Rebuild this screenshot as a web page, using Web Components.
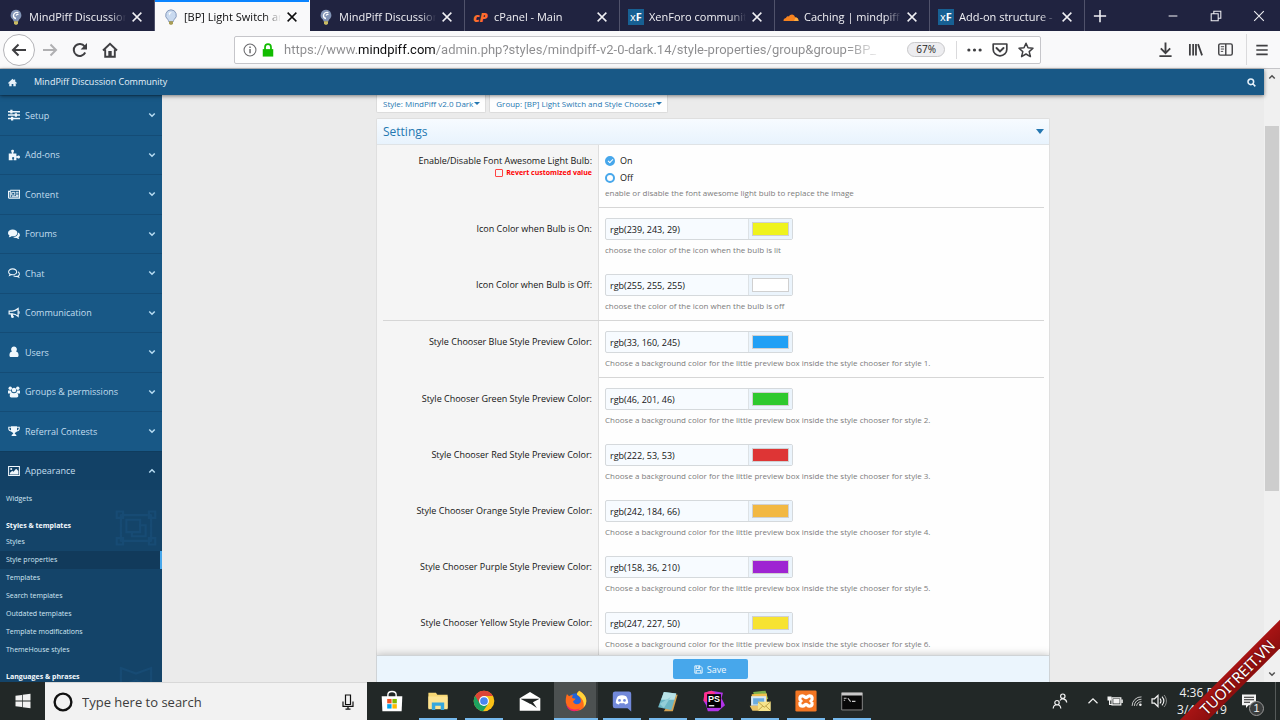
<!DOCTYPE html>
<html lang="en">
<head>
<meta charset="utf-8">
<meta name="viewport" content="width=device-width, initial-scale=1">
<title>[BP] Light Switch and Style Chooser</title>
<style>
  html, body { margin: 0; height: 100%; overflow: hidden; }
  body { font-family: "Open Sans", "Noto Sans", sans-serif; font-size: 9px; }
</style>
</head>
<body>
<desktop-screen>
  <browser-tabs slot="tabs"></browser-tabs>
  <browser-toolbar slot="toolbar"></browser-toolbar>
  <admin-page slot="page">
    <admin-header slot="header"></admin-header>
    <admin-sidebar slot="sidebar"></admin-sidebar>
    <menu-button slot="menus">Style: MindPiff v2.0 Dark</menu-button>
    <menu-button slot="menus">Group: [BP] Light Switch and Style Chooser</menu-button>
    <settings-panel heading="Settings">
      <toggle-property label="Enable/Disable Font Awesome Light Bulb:">enable or disable the font awesome light bulb to replace the image</toggle-property>
      <color-property label="Icon Color when Bulb is On:" value="rgb(239, 243, 29)">choose the color of the icon when the bulb is lit</color-property>
      <color-property rule="full" label="Icon Color when Bulb is Off:" value="rgb(255, 255, 255)">choose the color of the icon when the bulb is off</color-property>
      <color-property rule="half" label="Style Chooser Blue Style Preview Color:" value="rgb(33, 160, 245)">Choose a background color for the little preview box inside the style chooser for style 1.</color-property>
      <color-property label="Style Chooser Green Style Preview Color:" value="rgb(46, 201, 46)">Choose a background color for the little preview box inside the style chooser for style 2.</color-property>
      <color-property label="Style Chooser Red Style Preview Color:" value="rgb(222, 53, 53)">Choose a background color for the little preview box inside the style chooser for style 3.</color-property>
      <color-property label="Style Chooser Orange Style Preview Color:" value="rgb(242, 184, 66)">Choose a background color for the little preview box inside the style chooser for style 4.</color-property>
      <color-property label="Style Chooser Purple Style Preview Color:" value="rgb(158, 36, 210)">Choose a background color for the little preview box inside the style chooser for style 5.</color-property>
      <color-property label="Style Chooser Yellow Style Preview Color:" value="rgb(247, 227, 50)">Choose a background color for the little preview box inside the style chooser for style 6.</color-property>
    </settings-panel>
  </admin-page>
  <page-scrollbar slot="scrollbar"></page-scrollbar>
  <task-bar slot="taskbar"></task-bar>
  <corner-ribbon slot="overlay">TUOITREIT.VN</corner-ribbon>
</desktop-screen>

<script>
(function () {
  // stroke icon helper
  const line = (d, w = 1.5, extra = '') =>
    `<path d="${d}" fill="none" stroke="currentColor" stroke-width="${w}" ${extra}/>`;

  // All on a 16x16 grid
  const ICONS = {
    back: line('M15 8H2M7.5 2.5L2 8l5.5 5.5', 2),
    forward: line('M1 8h13M8.5 2.5L14 8l-5.5 5.5', 2),
    reload: line('M13.2 10.5A6 6 0 1 1 12.6 4.3', 2) + '<path d="M15 1v6.5H8.6z" fill="currentColor"/>',
    house: line('M1 8.5L8 1.8l7 6.7M3.2 7.5v7.3h9.6V7.5', 1.9) + '<path d="M6.3 9h3.4v6H6.3z" fill="currentColor"/>',
    info: line('M8 1.2a6.8 6.8 0 1 0 0 13.6A6.8 6.8 0 1 0 8 1.2z', 1.2) + '<path d="M7.2 6.8h1.7v5H7.2zM7.2 4h1.7v1.7H7.2z" fill="currentColor"/>',
    lock: '<path d="M2 7h12v8.5H2z" fill="currentColor"/>' + line('M4.6 8V4.8a3.4 3.4 0 0 1 6.8 0V8', 2),
    dots: '<g fill="currentColor"><circle cx="2" cy="8" r="1.7"/><circle cx="8" cy="8" r="1.7"/><circle cx="14" cy="8" r="1.7"/></g>',
    pocket: line('M1.2 2h13.6v5.5a6.8 6.3 0 0 1-13.6 0z', 1.7, 'stroke-linejoin="round"') + line('M4.5 6L8 9.4 11.5 6', 2, 'stroke-linecap="round"'),
    star: line('M8 1.2l2 4.6 5 .5-3.8 3.3 1.2 5L8 12l-4.4 2.6 1.2-5L1 6.3l5-.5z', 1.5, 'stroke-linejoin="round"'),
    download: line('M8 .5v11M3 6.8l5 5 5-5M1.5 15h13', 2),
    library: line('M2 2v12.5M5.5 2v12.5M8.5 2v12.5M10.7 2.3l4.3 12', 1.9),
    reader: line('M2.5 2h11a1.7 1.7 0 0 1 1.7 1.7v8.6a1.7 1.7 0 0 1-1.7 1.7h-11A1.7 1.7 0 0 1 .8 12.3V3.7A1.7 1.7 0 0 1 2.5 2zM8.3 2v12', 1.5) + line('M3 5h3.5M3 7.5h3.5M3 10h2.5', 1),
    burger: line('M1.5 3h13M1.5 8h13M1.5 13h13', 1.9),
    close: line('M3 3l10 10M13 3L3 13', 1.7),
    plus: line('M8 1v14M1 8h14', 1.8),
    minimize: line('M3 8h10', 1.2),
    restore: line('M2.5 5.5h8v8h-8zM5.5 5.5v-3h8v8h-3', 1.2),
    winClose: line('M2.5 2.5l11 11M13.5 2.5l-11 11', 1.2),
    chevronDown: line('M2.5 5L8 10.5 13.5 5', 3),
    chevronUp: line('M2.5 11L8 5.5l5.5 5.5', 3),
    bulb: `<path d="M8 .8a5.4 5.4 0 0 0-3.2 9.7c.5.5.7 1.3.8 2h4.8c.1-.7.3-1.5.8-2A5.4 5.4 0 0 0 8 .8z" fill="#c9daf0" stroke="#7f93b5" stroke-width=".9"/>
      <path d="M5.7 4.3A3 3 0 0 1 9 3.4c-1.5.6-2.3 1.7-2.3 3.4" fill="#fff"/><path d="M6 12.3h4v2.3L9 15.800H7l-1-1.200z" fill="#a99d55"/>`,
    bulbDark: `<path d="M8 .8a5.4 5.4 0 0 0-3.2 9.7c.5.5.7 1.3.8 2h4.8c.1-.7.3-1.5.8-2A5.4 5.4 0 0 0 8 .8z" fill="#8294b6"/>
      <path d="M10.4 3.7a3.5 3.5 0 0 0-4.9 2.6 3 3 0 0 0 2.5 3.2M10.5 5.5A2 2 0 0 0 8 6.5" fill="none" stroke="#fff" stroke-width="1.3"/><path d="M6 12.3h4v2.3L9 15.8H7l-1-1.2z" fill="#c9bb62"/>`,
    cloud: '<path d="M.5 12c0-2 1.2-2.8 2.5-2.9C3.4 7.2 5 7 6 7.5 7 5 11.3 4.7 12 8.3c2 0 3.5 1.5 3.5 3.7z" fill="#f6821f"/><path d="M11 12l1.4-3.6c2 0 3.2 1.5 3.1 3.6z" fill="#fbad41"/>',
    home: '<path d="M8 1.5l2.8 2.5V2.5h2V6L16 8.8 15 10l-1.2-1v5.5H9.5v-4h-3v4H2.2V9L1 10 0 8.8z" fill="currentColor"/>',
    search: line('M6.8 1.8a5 5 0 1 0 0 10 5 5 0 1 0 0-10zM10.3 10.3l4.5 4.5', 2.8),
    sliders: '<path d="M0 2.5h3V1h3v1.5h10v2H6V6H3V4.5H0zM0 7h9V5.8h3V7h4v2h-4v1.3H9V9H0zM0 11.7h4v-1.5h3v1.5h9v2H7v1.5H4v-1.5H0z" fill="currentColor"/>',
    puzzle: '<path d="M1 6h4.2C5.6 4.5 4 3.8 4.2 2.3 4.6.5 7.7.5 8 2.3 8.2 3.8 6.7 4.5 7 6h4.2v3.5c1.6.3 2-1 3.3-.8 2 .4 2 3.6 0 4-1.4.2-1.7-1.2-3.3-1V15H7.6c-.5-1.7 1-2 .7-3.2-.4-1.3-2.5-1.3-2.9 0-.3 1.2 1.2 1.6.7 3.2H1z" fill="currentColor"/>',
    news: line('M3 3h12.3v10.5H2A1.3 1.3 0 0 1 .7 12V4.5H3V12', 1.4) + line('M5 5.8h4v3.7H5zM10.5 5.8H14M10.5 8h3.5M10.5 10H14M5 11.5h9', 1.2),
    comments: '<path d="M6.2 2C2.8 2 0 4 0 6.6c0 1.4.8 2.6 2.1 3.4L1 12.4c1.5-.2 2.8-.7 3.7-1.4 4.3.7 7.8-1.5 7.8-4.4S9.6 2 6.2 2z" fill="currentColor"/><path d="M13.3 6c.4 3.5-2.5 6-6.5 6.2 1.2.9 3 1.3 4.7 1 .9.7 2 1.1 3.5 1.3l-1-2.2c2.5-1.5 2.6-4.9-.7-6.3z" fill="currentColor"/>',
    commentsO: line('M6.2 2.5C3.2 2.5.8 4.3.8 6.6c0 1.3.8 2.4 2 3.1l-.7 1.6 2.5-1.2C8.5 10.8 11.6 9 11.6 6.6S9.2 2.5 6.2 2.5z', 1.4) + line('M13.3 6.3c2.7 1.5 2.4 4.3.2 5.7l.8 1.7-2.6-1.2c-1.6.2-3.2-.1-4.3-.8', 1.4),
    bullhorn: line('M1.5 5.5h4.2C8.5 5.5 11 4.2 13.5 2v10.5C11 10.2 8.5 9.2 5.7 9.2H1.5z', 1.6) + '<path d="M3.5 9h3c-.3 2 .5 3 1.6 4-.7 2-3 1.8-3.8.9zM14 5.5h1.5v3.6H14z" fill="currentColor"/>',
    user: '<path d="M8 .8a3.7 3.7 0 0 1 2.7 6.4c2.5.4 3.4 2.5 3.4 5 0 1.7-.9 2.6-2.3 2.6H4.2c-1.4 0-2.3-.9-2.3-2.6 0-2.5.9-4.6 3.4-5A3.7 3.7 0 0 1 8 .8z" fill="currentColor"/>',
    users: '<g fill="currentColor"><circle cx="3" cy="3" r="2.3"/><circle cx="13" cy="3" r="2.3"/><circle cx="8" cy="5.3" r="3"/><path d="M0 6h3.9c.1 1 .5 1.8 1 2.3L3.5 10H0zM16 6h-3.9c-.1 1-.5 1.8-1 2.3l1.4 1.7H16zM4.8 8.5c2 1.4 4.4 1.4 6.4 0 2 .7 2.5 2.7 2.5 4.5 0 1.5-.8 2.3-2 2.3H4.3c-1.2 0-2-.8-2-2.3 0-1.8.5-3.8 2.5-4.5z"/></g>',
    trophy: '<path d="M4 1.5h8V8c0 1.5-2.8 2-3 3.3-.1 1 2.2 1 2.2 2.7v.7H4.8V14c0-1.7 2.3-1.7 2.2-2.7C6.8 10 4 9.5 4 8z" fill="currentColor"/>' + line('M4 3H1v1.5C1 6.5 2.7 7.8 5 8M12 3h3v1.5c0 2-1.7 3.3-4 3.5', 1.4),
    picture: line('M.8 2h14.4v12H.8z', 1.4) + '<path d="M2.5 12.5v-2L5.6 7.5 7.3 9l3.5-4 3 3v4.5z" fill="currentColor"/><circle cx="4.3" cy="5.3" r="1.4" fill="currentColor"/>',
    floppy: line('M1.5 1.5H11L14.5 5v9.5h-13zM4 1.8v4.4h6V1.8M4 14V9.5h8V14', 1.6) + '<path d="M7.7 2h2v3.5h-2z" fill="currentColor"/>',
    group: line('M2.5 3.3h11M2.5 12.7h11M2.5 3v10M13.5 3v10M4.5 5h5v4.5h-5zM9.5 7h2v4h-5V9.5', .8) + line('M1 2h2.3v2.3H1zM12.7 2H15v2.3h-2.3zM1 11.7h2.3V14H1zM12.7 11.7H15V14h-2.3z', .8),
    flag: '<path d="M2.5 4l5.5 2 5.5-2v6.5L8 8.5l-5.5 2z" fill="none" stroke="currentColor" stroke-width=".8"/>',
    windows: '<path d="M.5 2.8L7 1.9v5.7H.5zM7.7 1.8L15.5.7v6.9H7.7zM.5 8.4H7v5.7l-6.5-.9zM7.7 8.4h7.8v6.9l-7.8-1.1z" fill="currentColor"/>',
    ring: line('M8 1.3a6.7 6.7 0 1 0 0 13.4A6.7 6.7 0 1 0 8 1.3z', 1.9),
    mic: line('M5.5 1h5v9.5h-5zM3 7.5v4.8h10V7.5M8 12.5V15M5.5 15.2h5', 1.2),
    store: `<path d="M5 5V3.5C5 .3 11 .3 11 3.5V5" fill="none" stroke="#fff" stroke-width="1"/><path d="M.5 4.5h15l-.5 11H1z" fill="#fff"/>
      <path d="M4.5 6.5h3.2v3.2H4.5z" fill="#f25022"/><path d="M8.3 6.5h3.2v3.2H8.3z" fill="#7fba00"/><path d="M4.5 10.3h3.2v3.2H4.5z" fill="#00a4ef"/><path d="M8.3 10.3h3.2v3.2H8.3z" fill="#ffb900"/>`,
    explorer: '<path d="M1 2h5.5l1 1.5H15v9.5H1z" fill="#f7d774"/><path d="M1 4.7h14V14H1z" fill="#fde391"/><path d="M3.5 14.5V9h9v5.5H10v-3H6v3z" fill="#35a7dd"/>',
    chrome: `<circle cx="8" cy="8" r="7.5" fill="#fbc116"/><path d="M1.5 4.25A7.5 7.5 0 0 0 7.3 15.5L11.2 9.8 8 8z" fill="#1da260"/>
      <path d="M1.5 4.25L5 10 8 8V4.3H14.5A7.5 7.5 0 0 0 1.5 4.25z" fill="#dc4437"/><circle cx="8" cy="8" r="3.6" fill="#fff"/><circle cx="8" cy="8" r="2.8" fill="#4886ef"/>`,
    mail: '<path d="M.5 6L8 1.5 15.5 6v9H.5z" fill="#fff"/><path d="M1 6.3h14L8 10z" fill="#202524"/><path d="M7 9l6 4-3.5-5z" fill="#202524"/>',
    firefox: `<circle cx="8" cy="8.3" r="6" fill="#2464d8"/><path d="M1.3 3.2C1.7 3 2.5 4.3 3 4.5 4 3.8 5 3.7 6 4c-.8.6-.9 1.2-.8 1.7.8.6 1.7.5 2.5.7-.3 1-1.5 1.2-1.8 2 .6 2.3 3.3 2.3 4.8 1.3C12.7 8 11 4.5 8.7 3.4c-.1-1.2.8-2 1.6-2.9 3 1.8 5.3 4.3 5.2 7.6A7.5 7.5 0 0 1 .6 9C.4 6.7.7 5 1.3 3.2z" fill="#ff6a1a"/>
      <path d="M10.3.5c3 1.8 5.3 4.3 5.2 7.6-.1 2-1 3.5-2 4.6.7-3.7-.5-6.7-4.8-9.3-.1-1.2.8-2 1.6-2.9z" fill="#ffd43a"/><path d="M.8 10c1.5 3.8 6.5 5.3 10.2 3.3-2.3 3.3-9 3.2-10.2-3.3z" fill="#f0246a"/>`,
    discord: '<path d="M3 1h10a1.7 1.7 0 0 1 1.7 1.7V15.6L12 13.3H3a1.7 1.7 0 0 1-1.7-1.7V2.7A1.7 1.7 0 0 1 3 1z" fill="#7289da"/><path d="M5 4.5c2-.8 4-.8 6 0 1 1.5 1.5 3 1.5 5-.8.7-1.5.9-2.3 1l-.6-1c-1.1.2-2.1.2-3.2 0l-.6 1c-.8-.1-1.5-.3-2.3-1 0-2 .5-3.5 1.5-5z" fill="#fff"/><circle cx="6.2" cy="7.6" r="1" fill="#7289da"/><circle cx="9.8" cy="7.6" r="1" fill="#7289da"/>',
    notes: '<path d="M12.5 3l2.5.5-3.5 12H5z" fill="#d5a251"/><path d="M5 1.5l9 1-3.5 12L.8 12.5z" fill="#6db6c4"/><path d="M5 1.5l9 1-1.3 4.5L3 7z" fill="#b9e2e7"/><path d="M2 10l8-5-5 8z" fill="#93ced8"/>',
    hexes: '<path d="M1 2l5-1.5L14.5 2l-1 4L16 11l-5 4.5H3.5L2.3 11 .4 8z" fill="#b234e8"/><path d="M1 2l5-1.5L9 2 4 9 .4 8z" fill="#ff318c"/><path d="M3 3h10v10H3z" fill="#000"/><path d="M4.2 11h4v.9h-4z" fill="#fff"/>',
    photos: '<path d="M3 1.5l9-1 2 6-9 2z" fill="#7eb04c"/><path d="M2 3l11-.5V9H2z" fill="#f1bf4c"/><path d="M1.5 4.5h11v7h-11z" fill="#d9e8f3"/><path d="M3 6h8v4.5H3z" fill="#6aabdf"/><path d="M.5 11.5h7V15h-5z" fill="#e8c265"/><path d="M6.5 8.5h9.3v6.8H6.5z" fill="#f6e48c"/><path d="M6.5 8.5l4.6 4 4.7-4M6.5 15l3.5-3.3M15.8 15l-3.5-3.3" fill="none" stroke="#b6963a" stroke-width=".6"/>',
    xampp: '<rect x=".3" y=".3" width="15.4" height="15.4" rx="1" fill="#f37623"/><path d="M5.5 4.3c1.4 0 1.7 1.3 2.5 1.3s1.1-1.3 2.5-1.3c2.4 0 2.4 2.5 1.2 3.7 1.2 1.2 1.2 3.7-1.2 3.7-1.4 0-1.7-1.3-2.5-1.3s-1.1 1.3-2.5 1.3c-2.4 0-2.4-2.5-1.2-3.7-1.2-1.2-1.2-3.7 1.2-3.7z" fill="none" stroke="#fff" stroke-width="2.3"/>',
    console: '<path d="M.5 2h15v12.5H.5z" fill="#080808" stroke="#888" stroke-width=".7"/><path d="M.5 2h15v2H.5z" fill="#c8c8c8"/><path d="M2 6h2M2 7.5h1M5 6l2 2.5M8 8.3h2.5" fill="none" stroke="#ccc" stroke-width=".8"/>',
    people: line('M5 7.5a2.2 2.2 0 1 0 0 4.4 2.2 2.2 0 1 0 0-4.4zM1.2 15.5c.3-5 7.3-5 7.6 0M10.8 1a2.2 2.2 0 1 0 0 4.4 2.2 2.2 0 1 0 0-4.4zM8 7.5c1.5-2.5 6.5-2 6.7 2', 1.2),
    caretUp: line('M2 11l6-6 6 6', 1.6),
    battery: line('M5 4.8h8.8v7H5z', 1.2) + '<path d="M6.3 6h6.3v4.5H6.3zM14.3 6.5h1.5V10h-1.5zM.5 3.5h4v4h-4zM2 7h1.2v5H2zM3 11h2v1H3z" fill="currentColor"/>',
    wifi: line('M1.5 14.5A12 12 0 0 1 14 2.5M4.5 14.5A9 9 0 0 1 14 5.7M7.5 14.5A6 6 0 0 1 14 9', 1.3, 'opacity=".8"') + '<circle cx="12.5" cy="13" r="1.7" fill="currentColor"/>',
    speaker: line('M1 5.8h2.5L7 2.5v11L3.5 10.2H1z', 1.2) + line('M9 5.5c1.2 1.5 1.2 3.5 0 5M11 3.7c2.2 2.5 2.2 6 0 8.6', 1.1) + line('M13 2c3.2 3.5 3.2 8.5 0 12', 1, 'opacity=".5"'),
    action: '<path d="M1 1.5h14v10.8H7.5L5 15v-2.7H1z" fill="currentColor"/><path d="M3 4.3h10M3 6.8h10M3 9.3h6" stroke="#222" stroke-width="1.1"/>'
  };

  // Attach an open shadow root filled from a template
  function render(el, html) {
    const tpl = document.createElement('template');
    tpl.innerHTML = html;
    el.attachShadow({ mode: 'open' }).appendChild(tpl.content.cloneNode(true));
  }

  class UiIcon extends HTMLElement {
    connectedCallback() {
      if (this.shadowRoot) return;
      render(this, `
        <style>
          :host { display: inline-block; flex: none; width: 16px; height: 16px; }
          svg { display: block; width: 100%; height: 100%; }
        </style>
        <svg viewBox="0 0 16 16" aria-hidden="true">${ICONS[this.getAttribute('name')] || ''}</svg>
      `);
    }
  }

  class DesktopScreen extends HTMLElement {
    constructor() {
      super();
      render(this, `
        <style>
          :host { display: flex; flex-direction: column; height: 100vh; position: relative; overflow: hidden; }
          .view { display: flex; flex: 1; min-height: 0; }
        </style>
        <slot name="tabs"></slot>
        <slot name="toolbar"></slot>
        <div class="view"><slot name="page"></slot><slot name="scrollbar"></slot></div>
        <slot name="taskbar"></slot>
        <slot name="overlay"></slot>
      `);
    }
  }

  class BrowserTab extends HTMLElement {
    constructor() {
      super();
      render(this, `
        <style>
          :host {
            display: flex; align-items: center; box-sizing: border-box;
            flex: 0 1 155px; min-width: 0; height: 31px; padding: 2px 9px 0 8px;
            border-right: 1px solid #50526b; color: #f0f0f4; font-size: 11px;
          }
          :host([active]) { background: #f9f9fa; color: #0c0c0d; border-right-color: #f9f9fa; box-shadow: inset 0 2px #0a84ff; }
          .title {
            flex: 1; min-width: 0; margin: 0 3px 0 5px; overflow: hidden; white-space: nowrap;
            line-height: 20px; -webkit-mask-image: linear-gradient(to left, transparent, #000 16px);
          }
          button { flex: none; width: 16px; height: 16px; padding: 1px; border: 0; background: none; color: inherit; }
          ui-icon { width: 14px; height: 14px; }
        </style>
        <slot name="icon"></slot>
        <span class="title"><slot></slot></span>
        <button aria-label="Close tab"><ui-icon name="close"></ui-icon></button>
      `);
    }
  }

  class BrowserTabs extends HTMLElement {
    constructor() {
      super();
      render(this, `
        <style>
          :host { display: flex; flex: none; height: 31px; background: #202340; color: #f0f0f4; }
          .cp { width: 16px; color: #ff6c2c; font: italic 800 13px/16px "Open Sans", sans-serif; }
          .xf { width: 16px; background: #176093; color: #fff; font: 11px/16px "Open Sans", sans-serif; text-align: center; }
          .xf b { font-weight: 700; }
          button { flex: none; display: grid; place-items: center; padding: 0; border: 0; background: none; color: inherit; }
          .new { width: 30px; }
          .new ui-icon { width: 14px; height: 14px; }
          .window { display: flex; margin-left: auto; }
          .window button { width: 43px; }
          .window ui-icon { width: 14px; height: 14px; }
        </style>
        <browser-tab><ui-icon slot="icon" name="bulbDark"></ui-icon>MindPiff Discussion C</browser-tab>
        <browser-tab active><ui-icon slot="icon" name="bulb"></ui-icon>[BP] Light Switch and</browser-tab>
        <browser-tab><ui-icon slot="icon" name="bulbDark"></ui-icon>MindPiff Discussion C</browser-tab>
        <browser-tab><span slot="icon" class="cp">cP</span>cPanel - Main</browser-tab>
        <browser-tab><span slot="icon" class="xf">x<b>F</b></span>XenForo community</browser-tab>
        <browser-tab><ui-icon slot="icon" name="cloud"></ui-icon>Caching | mindpiff.c</browser-tab>
        <browser-tab><span slot="icon" class="xf">x<b>F</b></span>Add-on structure - X</browser-tab>
        <button class="new" aria-label="New tab"><ui-icon name="plus"></ui-icon></button>
        <div class="window">
          <button aria-label="Minimize"><ui-icon name="minimize"></ui-icon></button>
          <button aria-label="Restore"><ui-icon name="restore"></ui-icon></button>
          <button aria-label="Close"><ui-icon name="winClose"></ui-icon></button>
        </div>
      `);
    }
  }

  class BrowserToolbar extends HTMLElement {
    constructor() {
      super();
      render(this, `
        <style>
          :host {
            display: flex; align-items: center; flex: none; box-sizing: border-box; height: 38px;
            padding: 0 8px 0 3px; background: #f9f9fa; color: #3f3f42; border-bottom: 1px solid #c5c5c8;
          }
          button { flex: none; display: grid; place-items: center; width: 30px; height: 30px; padding: 0; border: 0; background: none; color: inherit; }
          .back { box-sizing: border-box; width: 32px; height: 32px; border: 1px solid #b4b4b8; border-radius: 50%; background: #fff; }
          [disabled] { color: #b0b0b2; }
          .address {
            display: flex; align-items: center; flex: 1; min-width: 0; box-sizing: border-box; height: 28px;
            margin: 0 109px 0 109px; padding: 0 1px 0 8px; border: 1px solid #c6c6ca; border-radius: 2px; background: #fff;
          }
          .address button { width: 26px; height: 26px; }
          .lock { margin: 0 9px 0 4px; color: #12bc00; width: 14px; height: 14px; }
          .info { color: #6b6b6e; width: 14px; height: 14px; }
          input {
            flex: 1; min-width: 0; height: 24px; padding: 0; border: 0; outline: 0; font: 13px Roboto, sans-serif; color: #8c8c8e;
            background: linear-gradient(90deg, #8c8c8e 73px, #0c0c0d 73px 152px, #8c8c8e 152px calc(100% - 60px), transparent calc(100% - 24px));
            -webkit-background-clip: text; background-clip: text; -webkit-text-fill-color: transparent;
          }
          .zoom { padding: 0 8px; border: 1px solid #c8c8ca; border-radius: 8px; background: #ededf0; color: #222; font-size: 10px; line-height: 13px; }
          .bar { align-self: stretch; width: 1px; margin: 4px 4px 4px 11px; background: #dadadc; }
          .bar.end { margin: 3px 5px 3px 6px; }
          .dots { width: 15px; }
          .menu { width: 20px; }
          .menu ui-icon { width: 14px; height: 14px; }
          .tool ui-icon { width: 15px; height: 15px; }
        </style>
        <button class="back" aria-label="Back"><ui-icon name="back"></ui-icon></button>
        <button disabled aria-label="Forward"><ui-icon name="forward"></ui-icon></button>
        <button aria-label="Reload"><ui-icon name="reload"></ui-icon></button>
        <button aria-label="Home"><ui-icon name="house"></ui-icon></button>
        <div class="address">
          <ui-icon class="info" name="info"></ui-icon>
          <ui-icon class="lock" name="lock"></ui-icon>
          <input type="text" aria-label="Address" value="https://www.mindpiff.com/admin.php?styles/mindpiff-v2-0-dark.14/style-properties/group&amp;group=BP_">
          <span class="zoom">67%</span>
          <span class="bar"></span>
          <button aria-label="Page actions"><ui-icon class="dots" name="dots"></ui-icon></button>
          <button aria-label="Save to Pocket"><ui-icon name="pocket"></ui-icon></button>
          <button aria-label="Bookmark"><ui-icon name="star"></ui-icon></button>
        </div>
        <button class="tool" aria-label="Downloads"><ui-icon name="download"></ui-icon></button>
        <button class="tool" aria-label="Library"><ui-icon name="library"></ui-icon></button>
        <button class="tool" aria-label="Sidebars"><ui-icon name="reader"></ui-icon></button>
        <span class="bar end"></span>
        <button class="menu" aria-label="Menu"><ui-icon name="burger"></ui-icon></button>
      `);
    }
  }

  class AdminPage extends HTMLElement {
    constructor() {
      super();
      render(this, `
        <style>
          :host { display: flex; flex-direction: column; flex: 1; min-width: 0; background: #ebebeb; }
          .body { display: flex; flex: 1; min-height: 0; }
          main {
            display: flex; flex-direction: column; flex: 1; min-width: 0;
            box-sizing: border-box; max-width: 674px; margin: 0 auto;
          }
          .menus { display: flex; flex: none; gap: 3px; margin-bottom: 5px; }
        </style>
        <slot name="header"></slot>
        <div class="body">
          <slot name="sidebar"></slot>
          <main>
            <div class="menus"><slot name="menus"></slot></div>
            <slot></slot>
          </main>
        </div>
      `);
    }
  }

  class AdminHeader extends HTMLElement {
    constructor() {
      super();
      render(this, `
        <style>
          :host {
            display: flex; align-items: center; flex: none; height: 26px; padding: 0 8px; position: relative; z-index: 2;
            background: #185886; color: #e6f1fa; font-size: 9px; box-shadow: 0 1px 4px rgba(0, 0, 0, .5);
          }
          a { color: inherit; text-decoration: none; line-height: 26px; }
          .home { display: flex; margin-right: 17px; }
          .search { display: flex; margin-left: auto; }
          ui-icon { width: 9px; height: 9px; }
        </style>
        <a class="home" href="#" aria-label="Home"><ui-icon name="home"></ui-icon></a>
        <a href="#">MindPiff Discussion Community</a>
        <a class="search" href="#" aria-label="Search"><ui-icon name="search"></ui-icon></a>
      `);
    }
  }

  class AdminSidebar extends HTMLElement {
    constructor() {
      super();
      const sections = [
        ['sliders', 'Setup'], ['puzzle', 'Add-ons'], ['news', 'Content'], ['comments', 'Forums'],
        ['commentsO', 'Chat'], ['bullhorn', 'Communication'], ['user', 'Users'],
        ['users', 'Groups & permissions'], ['trophy', 'Referral Contests'], ['picture', 'Appearance']
      ];
      const links = ['Styles', 'Style properties', 'Templates', 'Search templates',
        'Outdated templates', 'Template modifications', 'ThemeHouse styles'];
      const open = 'Appearance';
      const current = 'Style properties';
      render(this, `
        <style>
          :host { display: block; flex: none; width: 162px; overflow: hidden; background: #144469; color: #c3deef; }
          a { color: inherit; text-decoration: none; }
          nav { display: flex; flex-direction: column; height: 395px; }
          nav a {
            display: flex; align-items: center; flex: 1; box-sizing: border-box; padding: 0 6px 0 8px;
            border-top: 1px solid #144c76; background: #185886; font-size: 9px;
          }
          nav a.open { background: #124166; border-color: #0f3c5e; }
          nav span { flex: 1; margin-left: 5px; }
          nav ui-icon { width: 12px; height: 12px; color: #f0f7fc; }
          nav ui-icon.chevron { width: 8px; height: 8px; color: #b7dcf2; }
          .sub a { display: block; padding-left: 6px; font-size: 7px; line-height: 18px; color: #d3e7f4; }
          .sub a.current { background: #113a5b; border-right: 2px solid #47a7eb; }
          .block { position: relative; }
          h3 { margin: 10px 0 0 6px; font-size: 7px; line-height: 15px; font-weight: 700; color: #f4fafe; }
          .ghost { position: absolute; right: 4px; top: -12px; width: 44px; height: 44px; color: #174b74; }
          .sub a, .sub h3 { position: relative; }
        </style>
        <nav>
          ${sections.map(([icon, name]) => `
            <a href="#" class="${name === open ? 'open' : ''}">
              <ui-icon name="${icon}"></ui-icon><span>${name.replace('&', '&amp;')}</span>
              <ui-icon class="chevron" name="${name === open ? 'chevronUp' : 'chevronDown'}"></ui-icon>
            </a>`).join('')}
        </nav>
        <div class="sub">
          <a href="#">Widgets</a>
          <div class="block">
            <ui-icon class="ghost" name="group"></ui-icon>
            <h3>Styles &amp; templates</h3>
            ${links.map(name => `<a href="#" class="${name === current ? 'current' : ''}">${name}</a>`).join('')}
          </div>
          <div class="block">
            <ui-icon class="ghost" name="flag"></ui-icon>
            <h3>Languages &amp; phrases</h3>
          </div>
        </div>
      `);
    }
  }

  class MenuButton extends HTMLElement {
    constructor() {
      super();
      render(this, `
        <style>
          :host { display: block; }
          button {
            display: flex; align-items: center; gap: 1px; height: 18px; padding: 0 5px 0 6px;
            border: 1px solid #dcdcdc; border-top: 0; border-radius: 0 0 2px 2px; background: #fefefe;
            color: #2577b1; font: inherit; font-size: 8px; white-space: nowrap;
          }
          i { border: 3px solid transparent; border-top: 3px solid; border-bottom: 0; }
        </style>
        <button aria-haspopup="true"><slot></slot><i></i></button>
      `);
    }
  }

  class SettingsPanel extends HTMLElement {
    constructor() {
      super();
      render(this, `
        <style>
          :host { display: flex; flex-direction: column; flex: 1; min-height: 0; color: #141414; }
          .card {
            flex: 1; min-height: 0; overflow: hidden; border: 1px solid #dfdfdf; border-bottom: 0;
            border-radius: 2px 2px 0 0; background: linear-gradient(90deg, #f5f5f5 221px, #dedede 221px 222px, #fefefe 222px);
          }
          h2 {
            display: flex; align-items: center; margin: 0; padding: 0 5px 0 6px; height: 25px; border-bottom: 1px solid #dfe3e6;
            background: linear-gradient(#f7fbff, #e8f3fd); color: #2577b1; font-size: 12px; font-weight: 400;
          }
          h2 span { flex: 1; }
          h2 i { border: 4px solid transparent; border-top: 5px solid; border-bottom: 0; }
          footer {
            display: flex; align-items: center; justify-content: center; flex: none; height: 26px; padding-right: 6px; position: relative;
            border: 1px solid #cfd3d6; border-bottom: 0; background: #ebf5fd; box-shadow: 0 0 8px rgba(0, 0, 0, .25);
            clip-path: inset(-10px 0 0 0);
          }
          button {
            display: flex; align-items: center; justify-content: center; gap: 4px; width: 75px; height: 20px; padding: 0;
            border: 0; border-radius: 2px; background: #47a7eb; color: #f2f9fe; font: inherit;
          }
          button ui-icon { width: 9px; height: 9px; }
        </style>
        <div class="card">
          <h2><span></span><i></i></h2>
          <slot></slot>
        </div>
        <footer><button><ui-icon name="floppy"></ui-icon>Save</button></footer>
      `);
    }
    connectedCallback() {
      this.shadowRoot.querySelector('h2 span').textContent = this.getAttribute('heading');
    }
  }

  // Shared by both kinds of property row
  const ROW_STYLE = `
    :host { display: grid; grid-template-columns: 221px 1fr; position: relative; }
    .label { padding: 10px 6px 0 0; text-align: right; line-height: 22px; font-size: 9px; }
    .value { padding: 10px 0 0 7px; font-size: 9px; }
    .hint { color: #7c7c7c; font-size: 8px; line-height: 16px; margin-top: 2px; }
    input { font: inherit; color: inherit; }
  `;

  class ToggleProperty extends HTMLElement {
    connectedCallback() {
      if (this.shadowRoot) return;
      render(this, `
        <style>
          ${ROW_STYLE}
          :host { height: 63px; }
          .label { padding-top: 8px; line-height: 16px; }
          .revert { display: flex; align-items: center; justify-content: flex-end; gap: 3px; color: #f00; font-size: 7px; font-weight: 700; line-height: 8px; }
          .revert input { appearance: none; box-sizing: border-box; width: 8px; height: 8px; margin: 0; border: 1px solid #f44; border-radius: 1px; }
          .value { padding-top: 7px; }
          .choice { display: flex; align-items: center; gap: 5px; line-height: 17px; }
          .choice input { appearance: none; box-sizing: border-box; width: 10px; height: 10px; margin: 0; border: 2px solid #47a7eb; border-radius: 50%; }
          .choice input:checked { background: #47a7eb; }
          .choice input:checked::after {
            content: ""; display: block; width: 4px; height: 2px; margin: 1px;
            border: solid #fff; border-width: 0 0 1px 1px; transform: rotate(-45deg);
          }
          .hint { margin-top: 0; line-height: 14px; }
          .value::after { content: ""; display: block; height: 1px; margin: 7px 5px 0 -6px; background: #d6d6d6; }
        </style>
        <div class="label">
          <div>${this.getAttribute('label')}</div>
          <label class="revert"><input type="checkbox">Revert customized value</label>
        </div>
        <div class="value" role="radiogroup" aria-label="${this.getAttribute('label')}">
          <label class="choice"><input type="radio" name="bulb" checked>On</label>
          <label class="choice"><input type="radio" name="bulb">Off</label>
          <div class="hint"><slot></slot></div>
        </div>
      `);
    }
  }

  class ColorProperty extends HTMLElement {
    connectedCallback() {
      if (this.shadowRoot) return;
      const value = this.getAttribute('value');
      const hex = '#' + value.match(/\d+/g).map(n => (+n).toString(16).padStart(2, '0')).join('');
      render(this, `
        <style>
          ${ROW_STYLE}
          :host { height: 56px; }
          :host([rule]) { border-bottom: 1px solid transparent; }
          :host([rule])::after {
            content: ""; position: absolute; left: 6px; right: 5px; bottom: -1px; height: 1px; background: #d6d6d6;
          }
          :host([rule="half"])::after { left: 222px; }
          .field { display: flex; box-sizing: border-box; width: 188px; height: 22px; border: 1px solid #d5d9dc; border-radius: 2px; background: #f7fbff; }
          input[type=text] { flex: 1; min-width: 0; padding: 0 4px; border: 0; outline: 0; background: none; }
          .swatch { display: grid; place-items: center; width: 43px; border-left: 1px solid #dde2e6; background: #ebf4fc; }
          input[type=color] { appearance: none; box-sizing: border-box; width: 37px; height: 14px; padding: 0; border: 1px solid #d0d0d0; background: none; }
          ::-webkit-color-swatch-wrapper { padding: 0; }
          ::-webkit-color-swatch { border: 0; border-radius: 0; }
        </style>
        <label class="label" for="value">${this.getAttribute('label')}</label>
        <div class="value">
          <div class="field">
            <input id="value" type="text" value="${value}">
            <span class="swatch"><input type="color" aria-label="Pick color" value="${hex}"></span>
          </div>
          <div class="hint"><slot></slot></div>
        </div>
      `);
    }
  }

  class PageScrollbar extends HTMLElement {
    constructor() {
      super();
      render(this, `
        <style>
          :host { display: flex; flex-direction: column; align-items: center; flex: none; width: 16px; background: #f0f0f0; color: #505050; }
          ui-icon { width: 8px; height: 8px; margin: 4px 0; }
          .track { flex: 1; align-self: stretch; display: grid; grid-template-rows: 41fr 365fr 175fr; padding: 0 1px; }
          .thumb { grid-row: 2; background: #cdcdcd; }
        </style>
        <ui-icon name="chevronUp"></ui-icon>
        <div class="track"><div class="thumb"></div></div>
        <ui-icon name="chevronDown"></ui-icon>
      `);
    }
  }

  class TaskBar extends HTMLElement {
    constructor() {
      super();
      const apps = [
        ['store', 'Store', ''], ['explorer', 'File Explorer', 'running'], ['chrome', 'Chrome', 'running'],
        ['mail', 'Mail', ''], ['firefox', 'Firefox', 'running active'], ['discord', 'Discord', 'running'],
        ['notes', 'Notepad', 'running'], ['hexes', 'PhpStorm', 'running'], ['photos', 'Photos', 'running'],
        ['xampp', 'XAMPP', 'running'], ['console', 'Command Prompt', 'running']
      ];
      render(this, `
        <style>
          :host { display: flex; flex: none; height: 38px; background: #222827; color: #f2f2f2; }
          button { display: grid; place-items: center; flex: none; padding: 0; border: 0; background: none; color: inherit; position: relative; }
          .start { width: 45px; }
          .search {
            display: flex; align-items: center; gap: 9px; box-sizing: border-box; flex: none; width: 322px; padding: 0 11px 0 8px;
            background: #f2f2f2; color: #111; border-top: 1px solid #d8d8d8;
          }
          .search ui-icon { width: 20px; height: 20px; }
          .search ui-icon.mic { width: 16px; height: 16px; }
          input { flex: 1; min-width: 0; padding: 0; border: 0; outline: 0; background: none; font: inherit; font-size: 13px; }
          input::placeholder { color: #3c3c3c; opacity: 1; }
          .apps { display: flex; flex: none; padding-left: 2px; }
          .apps button { width: 46px; }
          .apps ui-icon { width: 22px; height: 22px; }
          .running::after { content: ""; position: absolute; left: 4px; right: 4px; bottom: 0; height: 2px; background: #76b9ed; }
          .active { background: linear-gradient(90deg, #4c5151 42px, #333838 42px) 1px 0 / 44px no-repeat; }
          .active::after { left: 1px; right: 1px; }
          .ps { position: absolute; left: 17px; top: 12px; font-size: 9px; line-height: 10px; font-weight: 700; color: #fff; }
          .tray { display: flex; margin-left: auto; }
          .tray button { width: 22px; }
          .tray .people { width: 32px; margin-right: 6px; }
          .tray ui-icon { width: 16px; height: 16px; }
          .tray .small { width: 12px; height: 12px; }
          .clock { align-self: center; width: 64px; text-align: center; font-size: 12px; line-height: 17px; }
          .tray .note { width: 30px; margin-right: 11px; }
          .badge {
            position: absolute; left: 15px; top: 19px; box-sizing: border-box; width: 15px; height: 15px; border: 1px solid #999;
            border-radius: 50%; background: #3a3d3d; font-size: 11px; line-height: 13px; text-align: center;
          }
          .peek { width: 4px; border-left: 1px solid #555a59; }
        </style>
        <button class="start" aria-label="Start"><ui-icon name="windows"></ui-icon></button>
        <label class="search">
          <ui-icon name="ring"></ui-icon>
          <input type="text" aria-label="Search" placeholder="Type here to search">
          <ui-icon class="mic" name="mic"></ui-icon>
        </label>
        <div class="apps">
          ${apps.map(([icon, name, cls]) => `
            <button class="${cls}" aria-label="${name}"><ui-icon name="${icon}"></ui-icon>${icon === 'hexes' ? '<span class="ps">PS</span>' : ''}</button>`).join('')}
        </div>
        <div class="tray">
          <button class="people" aria-label="People"><ui-icon name="people"></ui-icon></button>
          <button aria-label="Hidden icons"><ui-icon class="small" name="caretUp"></ui-icon></button>
          <button aria-label="Battery"><ui-icon name="battery"></ui-icon></button>
          <button aria-label="Network"><ui-icon class="small" name="wifi"></ui-icon></button>
          <button aria-label="Volume"><ui-icon name="speaker"></ui-icon></button>
          <div class="clock">4:36 PM<br>3/4/2019</div>
          <button class="note" aria-label="Notifications"><ui-icon name="action"></ui-icon><span class="badge">1</span></button>
          <div class="peek"></div>
        </div>
      `);
    }
  }

  // Diagonal band over the bottom right corner
  class CornerRibbon extends HTMLElement {
    constructor() {
      super();
      render(this, `
        <style>
          :host { position: absolute; right: 0; bottom: 0; width: 110px; height: 110px; overflow: hidden; pointer-events: none; z-index: 5; }
          div {
            position: absolute; right: -47px; bottom: 33px; width: 180px; height: 20px; transform: rotate(-45deg);
            background: linear-gradient(#a81414, #8c0f0f); color: #fff; text-align: center;
            font: 15px/20px "Noto Sans", sans-serif; text-shadow: 0 0 2px #300;
          }
        </style>
        <div><slot></slot></div>
      `);
    }
  }

  customElements.define('ui-icon', UiIcon);
  customElements.define('desktop-screen', DesktopScreen);
  customElements.define('browser-tab', BrowserTab);
  customElements.define('browser-tabs', BrowserTabs);
  customElements.define('browser-toolbar', BrowserToolbar);
  customElements.define('admin-page', AdminPage);
  customElements.define('admin-header', AdminHeader);
  customElements.define('admin-sidebar', AdminSidebar);
  customElements.define('menu-button', MenuButton);
  customElements.define('settings-panel', SettingsPanel);
  customElements.define('toggle-property', ToggleProperty);
  customElements.define('color-property', ColorProperty);
  customElements.define('page-scrollbar', PageScrollbar);
  customElements.define('task-bar', TaskBar);
  customElements.define('corner-ribbon', CornerRibbon);
})();
</script>
</body>
</html>
